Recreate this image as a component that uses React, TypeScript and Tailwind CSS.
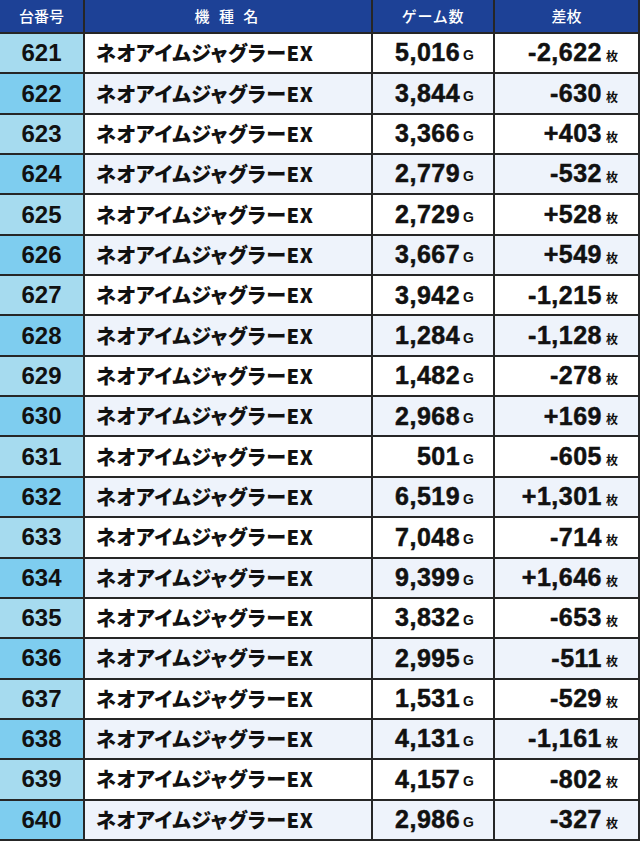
import React from "react";

const rows: [string, string, string][] = [
  ["621", "5,016", "-2,622"],
  ["622", "3,844", "-630"],
  ["623", "3,366", "+403"],
  ["624", "2,779", "-532"],
  ["625", "2,729", "+528"],
  ["626", "3,667", "+549"],
  ["627", "3,942", "-1,215"],
  ["628", "1,284", "-1,128"],
  ["629", "1,482", "-278"],
  ["630", "2,968", "+169"],
  ["631", "501", "-605"],
  ["632", "6,519", "+1,301"],
  ["633", "7,048", "-714"],
  ["634", "9,399", "+1,646"],
  ["635", "3,832", "-653"],
  ["636", "2,995", "-511"],
  ["637", "1,531", "-529"],
  ["638", "4,131", "-1,161"],
  ["639", "4,157", "-802"],
  ["640", "2,986", "-327"],
];

const jp = "font-['Noto_Sans_CJK_JP',sans-serif]";
const num = "font-['Liberation_Sans','Noto_Sans_CJK_JP',sans-serif]";

export default function App() {
  return (
    <div className="w-[640px] h-[841px] bg-[#262626] pr-[2px] pb-[2px] grid grid-cols-[83px_286px_120px_143px] grid-rows-[32px_repeat(20,1fr)] gap-[2px] overflow-hidden">
      <div className={`bg-[#1d4196] text-white flex items-center justify-center text-[15px] font-medium ${jp}`}>台番号</div>
      <div className={`bg-[#1d4196] text-white flex items-center justify-center text-[15px] font-medium tracking-[0.2em] ${jp}`}>機 種 名</div>
      <div className={`bg-[#1d4196] text-white flex items-center justify-center text-[15px] font-medium tracking-[0.05em] ${jp}`}>ゲーム数</div>
      <div className={`bg-[#1d4196] text-white flex items-center justify-center text-[15px] font-medium ${jp}`}>差枚</div>
      {rows.map(([no, games, diff], i) => {
        const even = i % 2 === 1;
        const bg = even ? "bg-[#eef3fb]" : "bg-white";
        return (
          <React.Fragment key={no}>
            <div className={`${even ? "bg-[#7ecdef]" : "bg-[#a6dbef]"} flex items-center justify-center text-[24px] font-bold text-[#111] ${num}`}>
              {no}
            </div>
            <div className={`${bg} flex items-center pl-[11px] text-[20px] font-black text-[#111] tracking-[0.03em] [font-feature-settings:'palt'] ${jp}`}>
              ネオアイムジャグラーEX
            </div>
            <div className={`${bg} flex items-center justify-end pr-[19px] text-[#111] ${num}`}>
              <span className="text-[25px] font-bold tracking-[0.02em] [-webkit-text-stroke:0.5px_#111]">{games}</span>
              <span className="text-[14px] font-bold ml-[3px] mt-[5px]">G</span>
            </div>
            <div className={`${bg} flex items-center justify-end pr-[20px] text-[#111] ${num}`}>
              <span className="text-[25px] font-bold tracking-[0.02em] [-webkit-text-stroke:0.5px_#111]">{diff}</span>
              <span className={`text-[12px] font-bold ml-[4px] mt-[6px] ${jp}`}>枚</span>
            </div>
          </React.Fragment>
        );
      })}
    </div>
  );
}
